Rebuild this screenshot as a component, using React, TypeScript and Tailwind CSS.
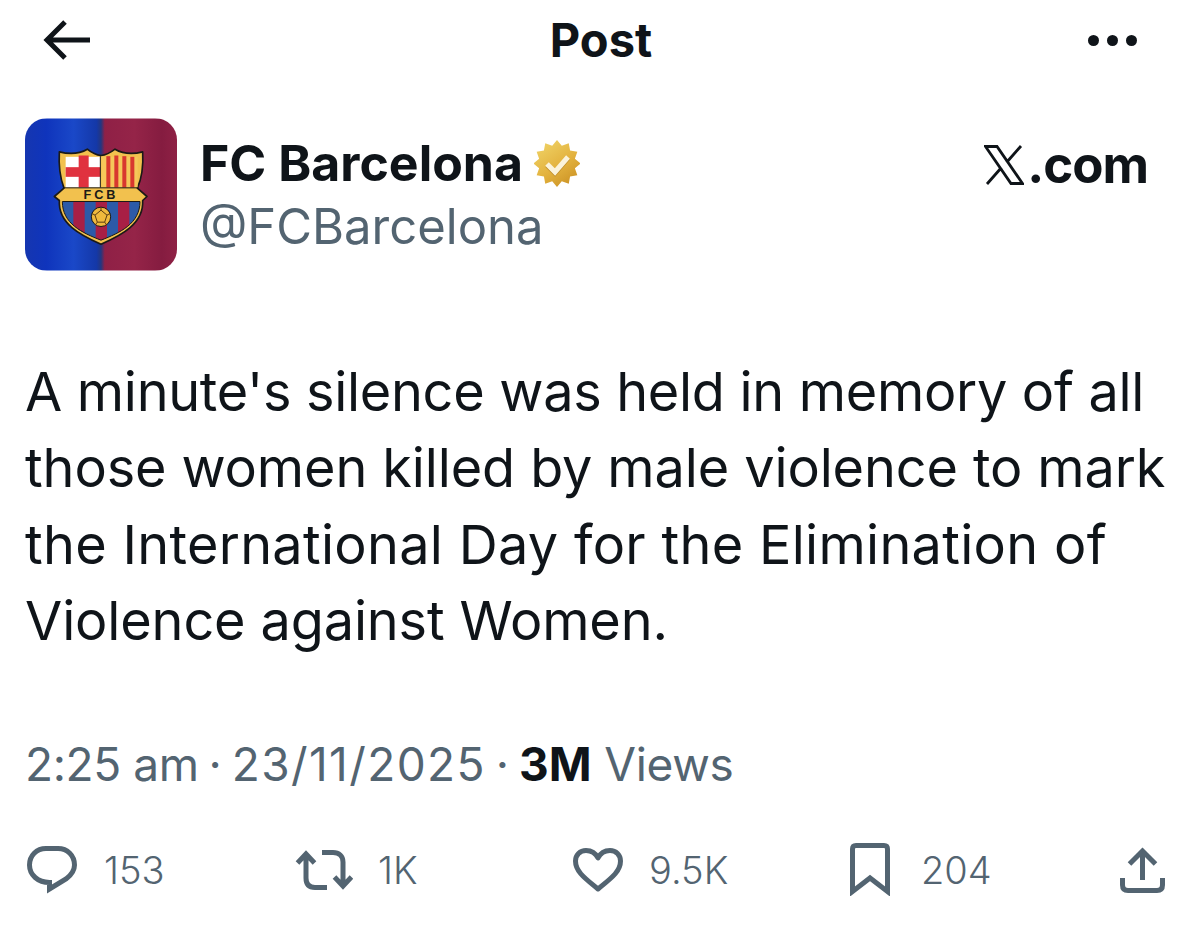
import React from "react";

const Crest = () => (
  <svg viewBox="75 55 456 456" className="w-full h-full block">
    <defs>
      <linearGradient id="av" x1="0" x2="1" y1="0" y2="0">
        <stop offset="0" stopColor="#1536b0" />
        <stop offset="0.14" stopColor="#0f34bc" />
        <stop offset="0.32" stopColor="#1a48c8" />
        <stop offset="0.47" stopColor="#1438a8" />
        <stop offset="0.5" stopColor="#24367f" />
        <stop offset="0.525" stopColor="#8f2046" />
        <stop offset="0.72" stopColor="#952448" />
        <stop offset="0.9" stopColor="#851c40" />
        <stop offset="1" stopColor="#8f2145" />
      </linearGradient>
      <clipPath id="low">
        <path d="M187 304H420C420 370 360 398 303 420C246 398 187 370 187 304Z" />
      </clipPath>
    </defs>
    <rect x="75" y="55" width="456" height="456" fill="url(#av)" />
    <path
      d="M178 155C210 163 240 160 262 147C275 158 290 165 303 166C316 165 331 158 345 147C367 160 397 163 428 155C430 190 425 235 412 264L441 289L428 301C432 370 365 405 303 432C241 405 174 370 178 301L163 289L192 264C181 235 176 190 178 155Z"
      fill="#f2c14e"
      stroke="#1b1a17"
      strokeWidth="5"
      strokeLinejoin="round"
    />
    <rect x="197" y="170" width="104" height="92" fill="#fff" />
    <rect x="236" y="166" width="30" height="96" fill="#e0323f" />
    <rect x="197" y="201" width="104" height="29" fill="#e0323f" />
    <path d="M301 168V262" stroke="#1b1a17" strokeWidth="3" />
    <rect x="305" y="170" width="108" height="92" fill="#f5c75a" />
    <rect x="319" y="168" width="12" height="94" fill="#d8382f" />
    <rect x="343" y="166" width="12" height="96" fill="#d8382f" />
    <rect x="367" y="168" width="12" height="94" fill="#d8382f" />
    <rect x="391" y="170" width="12" height="92" fill="#d8382f" />
    <path d="M190 263H416" stroke="#1b1a17" strokeWidth="3" />
    <text
      x="303"
      y="297"
      textAnchor="middle"
      fontFamily="'Liberation Sans', sans-serif"
      fontWeight="700"
      fontSize="38"
      letterSpacing="9"
      fill="#1b1a17"
    >
      FCB
    </text>
    <g clipPath="url(#low)">
      <rect x="180" y="300" width="250" height="130" fill="#2c5aa8" />
      <rect x="220" y="300" width="34" height="130" fill="#a81f45" />
      <rect x="287" y="300" width="34" height="130" fill="#a81f45" />
      <rect x="354" y="300" width="34" height="130" fill="#a81f45" />
    </g>
    <path
      d="M187 304H420C420 370 360 398 303 420C246 398 187 370 187 304Z"
      fill="none"
      stroke="#1b1a17"
      strokeWidth="3"
    />
    <circle cx="303" cy="350" r="29" fill="#f0b93c" stroke="#1b1a17" strokeWidth="3" />
    <path d="M303 330L285 345L292 366H314L321 345ZM303 330V322M285 345L276 340M321 345L330 340M292 366L286 374M314 366L320 374" fill="none" stroke="#5a3b12" strokeWidth="3" />
  </svg>
);

const starPath = (() => {
  const pts: string[] = [];
  for (let i = 0; i < 24; i++) {
    const r = i % 2 === 0 ? 23.5 : 18.5;
    const a = (Math.PI * 2 * i) / 24 - Math.PI / 2;
    pts.push(`${(23 + r * Math.cos(a)).toFixed(2)} ${(23.5 + r * Math.sin(a)).toFixed(2)}`);
  }
  return "M" + pts.join("L") + "Z";
})();

const Badge = () => (
  <svg viewBox="0 0 46 47" className="w-[46px] h-[47px] ml-[11px] shrink-0">
    <defs>
      <linearGradient id="gold" x1="0.15" y1="0" x2="0.85" y2="1">
        <stop offset="0" stopColor="#f0d468" />
        <stop offset="0.55" stopColor="#e3b23e" />
        <stop offset="1" stopColor="#c98f22" />
      </linearGradient>
    </defs>
    <path fill="url(#gold)" d={starPath} />
    <path d="M13 24L21 32L34 17" fill="none" stroke="#a9771c" strokeWidth="5" transform="translate(0 1.2)" opacity="0.6" />
    <path d="M13 24L21 32L34 17" fill="none" stroke="#fbf3da" strokeWidth="5" />
  </svg>
);

const G = "#536471";

const Stat = ({ icon, label, gap, width }: { icon: React.ReactNode; label: string; gap: string; width: string }) => (
  <div className={`flex items-center shrink-0 ${gap} ${width}`}>
    {icon}
    <span className="text-[38px] leading-[40px] text-[#536471] font-light">{label}</span>
  </div>
);

export default function App() {
  return (
    <div
      className="w-[1200px] h-[925px] bg-white overflow-hidden text-[#0f1419]"
      style={{ fontFamily: "Inter, 'Liberation Sans', sans-serif" }}
    >
      <header className="h-[80px] pl-[42px] pr-[63px] flex items-center justify-between">
        <svg viewBox="0 0 50 44" className="w-[50px] h-[44px]">
          <path d="M48 22H5M23 4L5 22L23 40" fill="none" stroke="#0f1419" strokeWidth="5" />
        </svg>
        <div className="text-[47px] leading-[50px] font-bold pl-[22px]">Post</div>
        <div className="flex gap-[8px]">
          <span className="w-[11px] h-[11px] rounded-full bg-[#0f1419]" />
          <span className="w-[11px] h-[11px] rounded-full bg-[#0f1419]" />
          <span className="w-[11px] h-[11px] rounded-full bg-[#0f1419]" />
        </div>
      </header>

      <section className="mt-[38px] pl-[25px] pr-[52px] flex items-start">
        <div className="w-[152px] h-[153px] rounded-[22px] overflow-hidden shrink-0">
          <Crest />
        </div>
        <div className="ml-[23px] flex-1">
          <div className="flex items-center h-[50px] mt-[20px]">
            <span className="text-[50px] leading-[50px] font-bold">FC Barcelona</span>
            <Badge />
          </div>
          <div className="text-[49px] leading-[56px] text-[#536471] mt-[11px]">@FCBarcelona</div>
        </div>
        <div className="mt-[22px] flex items-center">
          <svg viewBox="0 0 40 40" className="w-[40px] h-[40px] mr-[3px]">
            <path
              d="M1.5 1.5H13L38.5 38.5H27ZM3 39L17.5 22.5M37 1L22.5 17.5"
              fill="none"
              stroke="#0f1419"
              strokeWidth="2.8"
            />
          </svg>
          <span className="text-[51px] leading-[50px] font-bold tracking-[-1px]">.com</span>
        </div>
      </section>

      <div className="mt-[83px] pl-[25px] text-[54px] leading-[76.3px] whitespace-nowrap">
        <p className="tracking-[-0.3px]">A minute's silence was held in memory of all</p>
        <p className="tracking-[-0.11px]">those women killed by male violence to mark</p>
        <p className="tracking-[0.3px]">the International Day for the Elimination of</p>
        <p className="tracking-[-0.13px]">Violence against Women.</p>
      </div>

      <div className="mt-[77px] pl-[25px] text-[46px] leading-[56px] text-[#536471] whitespace-nowrap">
        <span className="tracking-[-0.4px]">2:25 am</span>
        <span className="mx-[-3px]"> · </span>
        <span className="tracking-[1.4px]">23/11/2025</span>
        <span className="mx-[-3px]"> · </span>
        <span className="font-bold text-[#0f1419]">3M</span>
        <span className="tracking-[-0.3px]"> Views</span>
      </div>

      <div className="mt-[51px] pl-[27px] flex items-center">
        <Stat
          width="w-[268px]"
          gap="gap-[27px]"
          label="153"
          icon={
            <svg viewBox="0 0 50 48" className="w-[50px] h-[48px]">
              <path
                d="M19 2.5H31C40.5 2.5 47.5 9.5 47.5 19C47.5 26 43 30 39 33L22.5 43V36.5C11 36.5 2.5 29 2.5 19C2.5 9.5 9.5 2.5 19 2.5Z"
                fill="none"
                stroke={G}
                strokeWidth="5"
              />
            </svg>
          }
        />
        <Stat
          width="w-[278px]"
          gap="gap-[25px]"
          label="1K"
          icon={
            <svg viewBox="0 0 58 40" className="w-[58px] h-[40px]">
              <path
                d="M2.5 13L11 4L19.5 13M11 5V28C11 34 14 37.5 20 37.5H32M27 2.5H38C44 2.5 48 6 48 12V35M39.5 27L48 36L56.5 27"
                fill="none"
                stroke={G}
                strokeWidth="5"
              />
            </svg>
          }
        />
        <Stat
          width="w-[277px]"
          gap="gap-[26px]"
          label="9.5K"
          icon={
            <svg viewBox="0 0 50 44" className="w-[50px] h-[44px]">
              <path
                d="M25 41C13 31 2.5 24 2.5 13C2.5 7 7 2.5 13 2.5C18 2.5 22.5 5 25 10C27.5 5 32 2.5 37 2.5C43 2.5 47.5 7 47.5 13C47.5 24 37 31 25 41Z"
                fill="none"
                stroke={G}
                strokeWidth="5"
                strokeLinejoin="round"
              />
            </svg>
          }
        />
        <Stat
          width="w-[270px]"
          gap="gap-[31px]"
          label="204"
          icon={
            <svg viewBox="0 0 40 53" className="w-[40px] h-[53px]">
              <path
                d="M2.5 48.5V6C2.5 3.5 4 2.5 6 2.5H34C36 2.5 37.5 3.5 37.5 6V48.5L20 35Z"
                fill="none"
                stroke={G}
                strokeWidth="5"
              />
            </svg>
          }
        />
        <svg viewBox="0 0 45 46" className="w-[45px] h-[46px] shrink-0">
          <path
            d="M22.5 5V33M9.5 17L22.5 4L35.5 17M2.5 31V38C2.5 41.5 4.5 43.5 8 43.5H37C40.5 43.5 42.5 41.5 42.5 38V31"
            fill="none"
            stroke={G}
            strokeWidth="5"
          />
        </svg>
      </div>
    </div>
  );
}
